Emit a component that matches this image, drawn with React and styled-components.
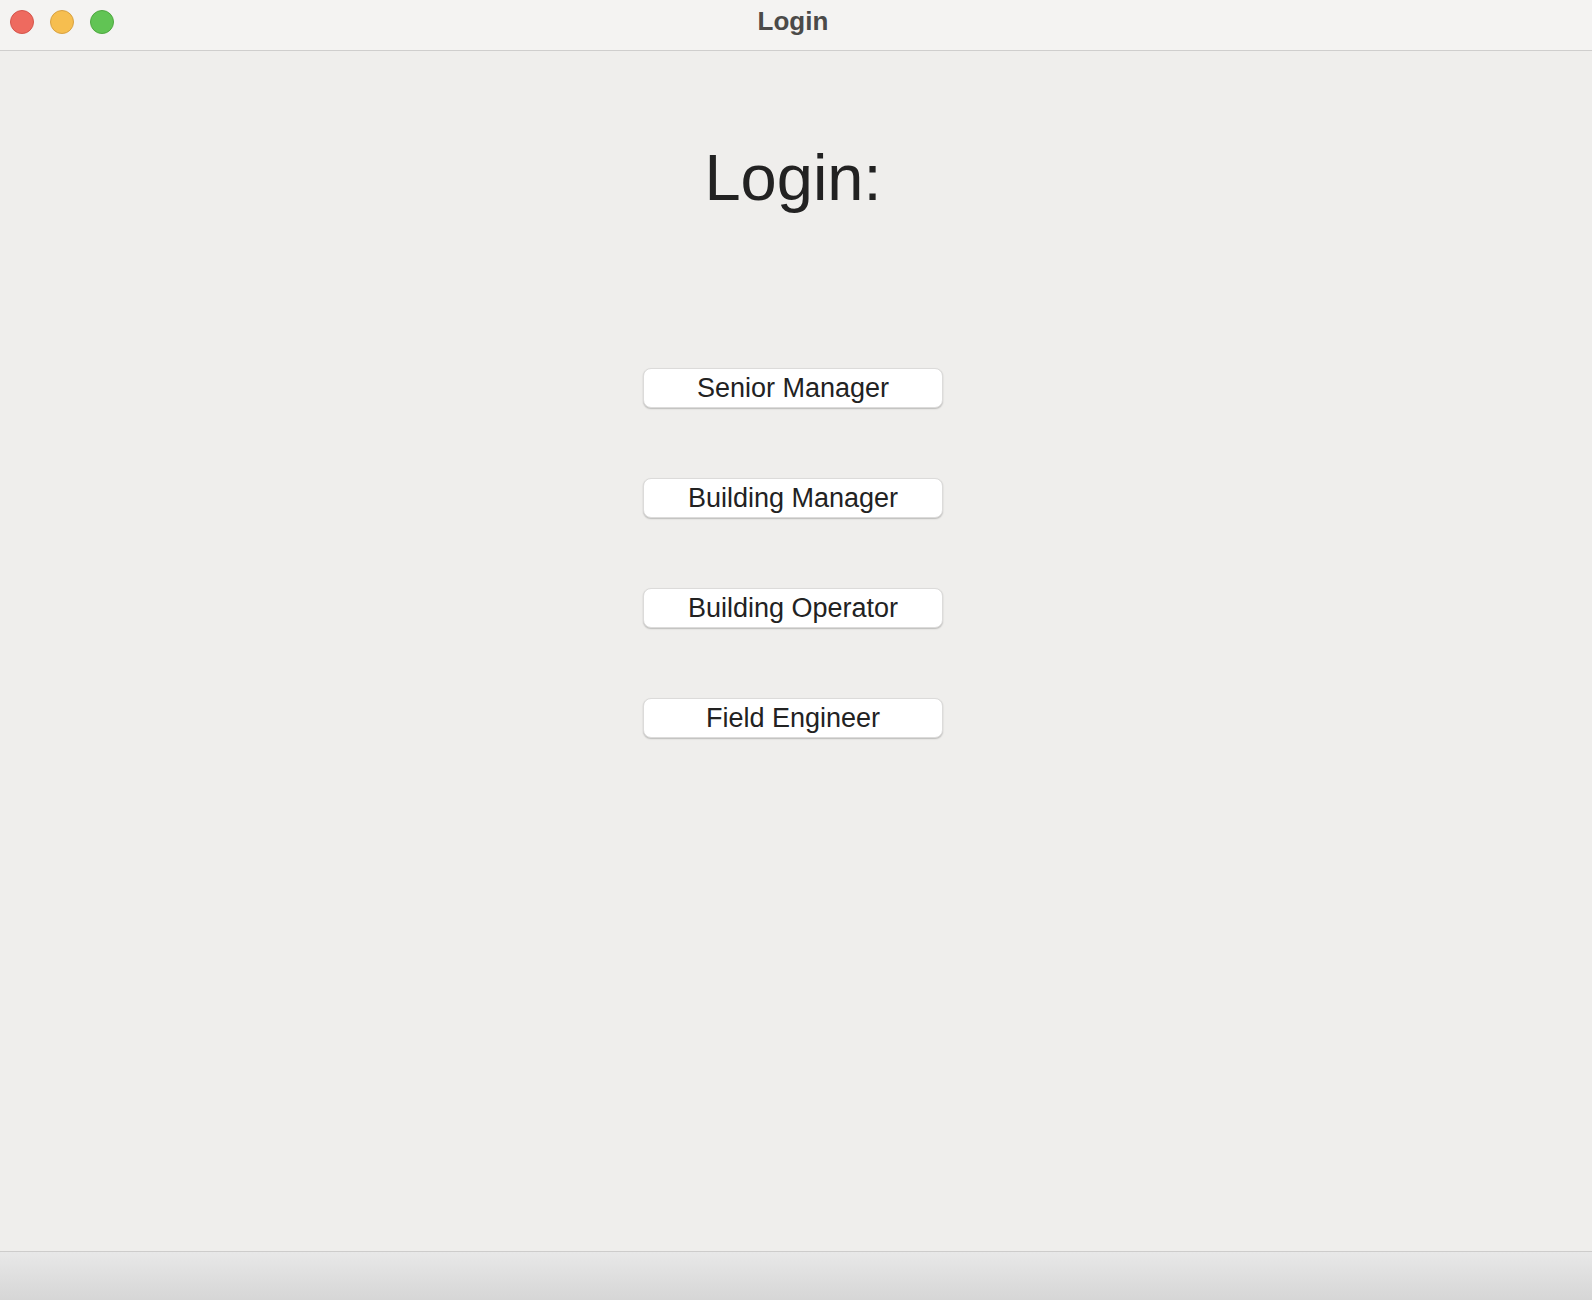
import styled, { createGlobalStyle } from "styled-components";

const GlobalStyle = createGlobalStyle`
  html, body {
    margin: 0;
    padding: 0;
    background: #efeeec;
  }
  * {
    box-sizing: border-box;
  }
`;

const roles = ["Senior Manager", "Building Manager", "Building Operator", "Field Engineer"];

const lights = [
  { fill: "#ee6a5f", edge: "#d5554b" },
  { fill: "#f6be4f", edge: "#d8a142" },
  { fill: "#61c454", edge: "#4ea840" },
];

export default function App() {
  return (
    <Window>
      <GlobalStyle />
      <TitleBar>
        <Lights>
          {lights.map((l) => (
            <Light key={l.fill} $fill={l.fill} $edge={l.edge} />
          ))}
        </Lights>
        <Title>Login</Title>
        <span />
      </TitleBar>
      <Content>
        <Heading>Login:</Heading>
        <ButtonList>
          {roles.map((r) => (
            <RoleButton key={r}>{r}</RoleButton>
          ))}
        </ButtonList>
      </Content>
      <BottomBar />
    </Window>
  );
}

const Window = styled.div`
  width: 1592px;
  height: 1300px;
  display: flex;
  flex-direction: column;
  font-family: "Liberation Sans", Arial, sans-serif;
  background: #efeeec;
  overflow: hidden;
`;

const TitleBar = styled.div`
  height: 51px;
  flex-shrink: 0;
  display: grid;
  grid-template-columns: 1fr auto 1fr;
  align-items: start;
  padding-right: 6px;
  background: #f4f3f2;
  border-bottom: 1px solid #cfcecd;
`;

const Lights = styled.div`
  display: flex;
  gap: 16px;
  padding-left: 10px;
  padding-top: 10px;
`;

const Light = styled.span`
  width: 24px;
  height: 24px;
  border-radius: 50%;
  background: ${(p) => p.$fill};
  border: 1px solid ${(p) => p.$edge};
`;

const Title = styled.div`
  font-size: 26px;
  font-weight: 700;
  line-height: 43px;
  color: #4b4a49;
`;

const Content = styled.div`
  flex: 1;
  display: flex;
  flex-direction: column;
  align-items: center;
  padding-top: 94px;
  padding-right: 6px;
`;

const Heading = styled.h1`
  margin: 0;
  font-size: 65px;
  font-weight: 400;
  line-height: 65px;
  color: #222222;
`;

const ButtonList = styled.div`
  display: flex;
  flex-direction: column;
  gap: 70px;
  margin-top: 158px;
`;

const RoleButton = styled.button`
  width: 300px;
  height: 40px;
  margin: 0;
  padding: 0;
  display: flex;
  align-items: center;
  justify-content: center;
  background: #ffffff;
  border: 1px solid #dcdbda;
  border-radius: 8px;
  box-shadow: 0 1px 1.5px rgba(0, 0, 0, 0.22);
  font-family: "Liberation Sans", Arial, sans-serif;
  font-size: 27px;
  color: #222222;
  cursor: pointer;
`;

const BottomBar = styled.div`
  height: 49px;
  flex-shrink: 0;
  border-top: 1px solid #cdcccb;
  background: linear-gradient(#e8e8e8, #d6d6d6);
`;
